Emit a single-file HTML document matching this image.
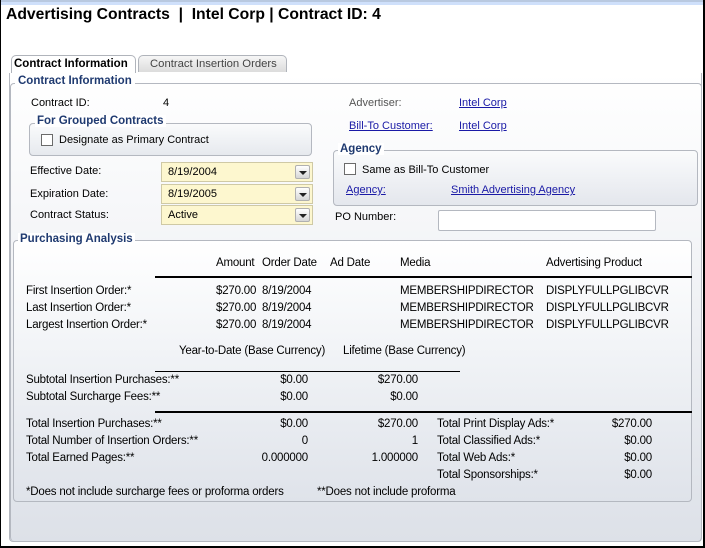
<!DOCTYPE html>
<html><head><meta charset="utf-8"><style>
*{margin:0;padding:0;box-sizing:border-box}
body{width:705px;height:548px;background:#fff;font-family:"Liberation Sans",Arial,sans-serif;font-size:11px;color:#000;position:relative;overflow:hidden}
.a{position:absolute;white-space:nowrap}
.lk{color:#1a1aa6;text-decoration:underline}
.leg{position:absolute;font-weight:bold;color:#1f3a70;font-size:11.5px;background:transparent;white-space:nowrap}
.fs{position:absolute;border:1px solid #b4b8c0;border-radius:4px}
.cb{position:absolute;width:12px;height:12px;border:1px solid #6b6b6b;background:#fff}
.dd{position:absolute;height:20px;background:#fdf7cf;border:1px solid #cfc9a5;padding:3px 0 0 6px}
.dd b{position:absolute;right:2px;top:2px;width:15px;height:14px;background:linear-gradient(#fff,#d6d6d6);border:1px solid #b0b0b0;border-radius:2px}
.dd b:after{content:"";position:absolute;left:3px;top:5px;border-left:4px solid transparent;border-right:4px solid transparent;border-top:4px solid #222}
.r{text-align:right}
.c{font-size:11.5px;letter-spacing:-0.2px}
</style></head><body>
<div class="a" style="left:0;top:0;width:705px;height:2px;background:#b9c9e0"></div>
<div class="a" style="left:0;top:2px;width:705px;height:3px;background:#cfe0fb"></div>
<div class="a" style="left:0;top:0;width:1px;height:548px;background:#000"></div>
<div class="a" style="right:0;top:0;width:2px;height:548px;background:#000"></div>
<div class="a" style="left:0;bottom:0;width:705px;height:2px;background:#000"></div>
<div class="a" style="left:6px;top:6px;font-size:15.7px;font-weight:bold">Advertising Contracts &nbsp;|&nbsp; Intel Corp | Contract ID: 4</div>

<div class="a" style="left:11px;top:55px;width:125px;height:19px;background:#fff;border:1px solid #b0b4bb;border-bottom:none;border-radius:5px 5px 0 0;font-weight:bold;font-size:11.5px;padding:2px 0 0 2px">Contract Information</div>
<div class="a" style="left:138px;top:55px;width:149px;height:17px;background:linear-gradient(#f6f6f6,#dcdcdc);border:1px solid #b0b4bb;border-bottom:none;border-radius:5px 5px 0 0;color:#444;font-size:11.3px;padding:2px 0 0 11px">Contract Insertion Orders</div>

<div class="a" style="left:9px;top:73px;width:693px;height:469px;background:linear-gradient(#fff 0%,#f6f7f9 30%,#dde1e8 100%);border-left:1px solid #b4b8c0;border-right:1px solid #b4b8c0;border-bottom:1px solid #b4b8c0;border-radius:0 0 4px 4px"></div>
<div class="fs" style="left:10px;top:83px;width:692px;height:458px;border-bottom:none"></div>
<div class="leg" style="left:15px;top:75px;background:#fff;padding:0 3px">Contract Information</div>

<div class="a" style="left:31px;top:97px">Contract ID:</div>
<div class="a" style="left:163px;top:97px">4</div>

<div class="fs" style="left:29px;top:123px;width:283px;height:33px;background:linear-gradient(#fafbfc,#e6e9ee)"></div>
<div class="leg" style="left:35px;top:115px;background:#fff;padding:0 2px">For Grouped Contracts</div>
<div class="cb" style="left:41px;top:134px"></div>
<div class="a" style="left:59px;top:134px">Designate as Primary Contract</div>

<div class="a" style="left:30px;top:165px">Effective Date:</div>
<div class="a" style="left:30px;top:188px">Expiration Date:</div>
<div class="a" style="left:30px;top:209px">Contract Status:</div>
<div class="dd" style="left:161px;top:162px;width:152px">8/19/2004<b></b></div>
<div class="dd" style="left:161px;top:184px;width:152px">8/19/2005<b></b></div>
<div class="dd" style="left:161px;top:205px;width:152px">Active<b></b></div>

<div class="a" style="left:349px;top:97px;color:#555">Advertiser:</div>
<div class="a lk" style="left:459px;top:97px">Intel Corp</div>
<div class="a lk" style="left:349px;top:120px">Bill-To Customer:</div>
<div class="a lk" style="left:459px;top:120px">Intel Corp</div>

<div class="fs" style="left:333px;top:150px;width:365px;height:56px;background:linear-gradient(#fafbfc,#e4e7ed)"></div>
<div class="leg" style="left:338px;top:143px;background:#fff;padding:0 2px">Agency</div>
<div class="cb" style="left:344px;top:163px"></div>
<div class="a" style="left:362px;top:164px">Same as Bill-To Customer</div>
<div class="a lk" style="left:346px;top:184px">Agency:</div>
<div class="a lk" style="left:451px;top:184px">Smith Advertising Agency</div>

<div class="a" style="left:335px;top:211px">PO Number:</div>
<div class="a" style="left:438px;top:210px;width:218px;height:21px;background:#fff;border:1px solid #b4b8c0;border-radius:2px"></div>

<div class="fs" style="left:13px;top:240px;width:679px;height:262px;background:linear-gradient(#fff,#f2f4f7 40%,#dfe3ea)"></div>
<div class="leg" style="left:18px;top:233px;background:#fff;padding:0 2px">Purchasing Analysis</div>

<div class="a c" style="left:216px;top:257px">Amount</div>
<div class="a c" style="left:262px;top:257px">Order Date</div>
<div class="a c" style="left:330px;top:257px">Ad Date</div>
<div class="a c" style="left:400px;top:257px">Media</div>
<div class="a c" style="left:546px;top:257px">Advertising Product</div>
<div class="a" style="left:155px;top:276px;width:537px;height:2px;background:#000"></div>

<div class="a c" style="left:26px;top:285px">First Insertion Order:*</div>
<div class="a c" style="left:26px;top:302px">Last Insertion Order:*</div>
<div class="a c" style="left:26px;top:319px">Largest Insertion Order:*</div>
<div class="a c" style="left:216px;top:285px">$270.00</div><div class="a c" style="left:262px;top:285px">8/19/2004</div>
<div class="a c" style="left:216px;top:302px">$270.00</div><div class="a c" style="left:262px;top:302px">8/19/2004</div>
<div class="a c" style="left:216px;top:319px">$270.00</div><div class="a c" style="left:262px;top:319px">8/19/2004</div>
<div class="a c" style="left:400px;top:285px">MEMBERSHIPDIRECTOR</div>
<div class="a c" style="left:400px;top:302px">MEMBERSHIPDIRECTOR</div>
<div class="a c" style="left:400px;top:319px">MEMBERSHIPDIRECTOR</div>
<div class="a c" style="left:546px;top:285px">DISPLYFULLPGLIBCVR</div>
<div class="a c" style="left:546px;top:302px">DISPLYFULLPGLIBCVR</div>
<div class="a c" style="left:546px;top:319px">DISPLYFULLPGLIBCVR</div>

<div class="a c" style="left:179px;top:345px">Year-to-Date (Base Currency)</div>
<div class="a c" style="left:343px;top:345px">Lifetime (Base Currency)</div>
<div class="a" style="left:155px;top:371px;width:305px;height:1px;background:#000"></div>

<div class="a c" style="left:26px;top:374px">Subtotal Insertion Purchases:**</div>
<div class="a c" style="left:26px;top:391px">Subtotal Surcharge Fees:**</div>
<div class="a c r" style="left:230px;top:374px;width:78px">$0.00</div>
<div class="a c r" style="left:340px;top:374px;width:78px">$270.00</div>
<div class="a c r" style="left:230px;top:391px;width:78px">$0.00</div>
<div class="a c r" style="left:340px;top:391px;width:78px">$0.00</div>
<div class="a" style="left:155px;top:411px;width:537px;height:2px;background:#000"></div>

<div class="a c" style="left:26px;top:418px">Total Insertion Purchases:**</div>
<div class="a c" style="left:26px;top:435px">Total Number of Insertion Orders:**</div>
<div class="a c" style="left:26px;top:452px">Total Earned Pages:**</div>
<div class="a c r" style="left:230px;top:418px;width:78px">$0.00</div>
<div class="a c r" style="left:230px;top:435px;width:78px">0</div>
<div class="a c r" style="left:230px;top:452px;width:78px">0.000000</div>
<div class="a c r" style="left:340px;top:418px;width:78px">$270.00</div>
<div class="a c r" style="left:340px;top:435px;width:78px">1</div>
<div class="a c r" style="left:340px;top:452px;width:78px">1.000000</div>
<div class="a c" style="left:437px;top:418px">Total Print Display Ads:*</div>
<div class="a c" style="left:437px;top:435px">Total Classified Ads:*</div>
<div class="a c" style="left:437px;top:452px">Total Web Ads:*</div>
<div class="a c" style="left:437px;top:469px">Total Sponsorships:*</div>
<div class="a c r" style="left:572px;top:418px;width:80px">$270.00</div>
<div class="a c r" style="left:572px;top:435px;width:80px">$0.00</div>
<div class="a c r" style="left:572px;top:452px;width:80px">$0.00</div>
<div class="a c r" style="left:572px;top:469px;width:80px">$0.00</div>

<div class="a c" style="left:26px;top:486px">*Does not include surcharge fees or proforma orders</div>
<div class="a c" style="left:317px;top:486px">**Does not include proforma</div>
</body></html>
